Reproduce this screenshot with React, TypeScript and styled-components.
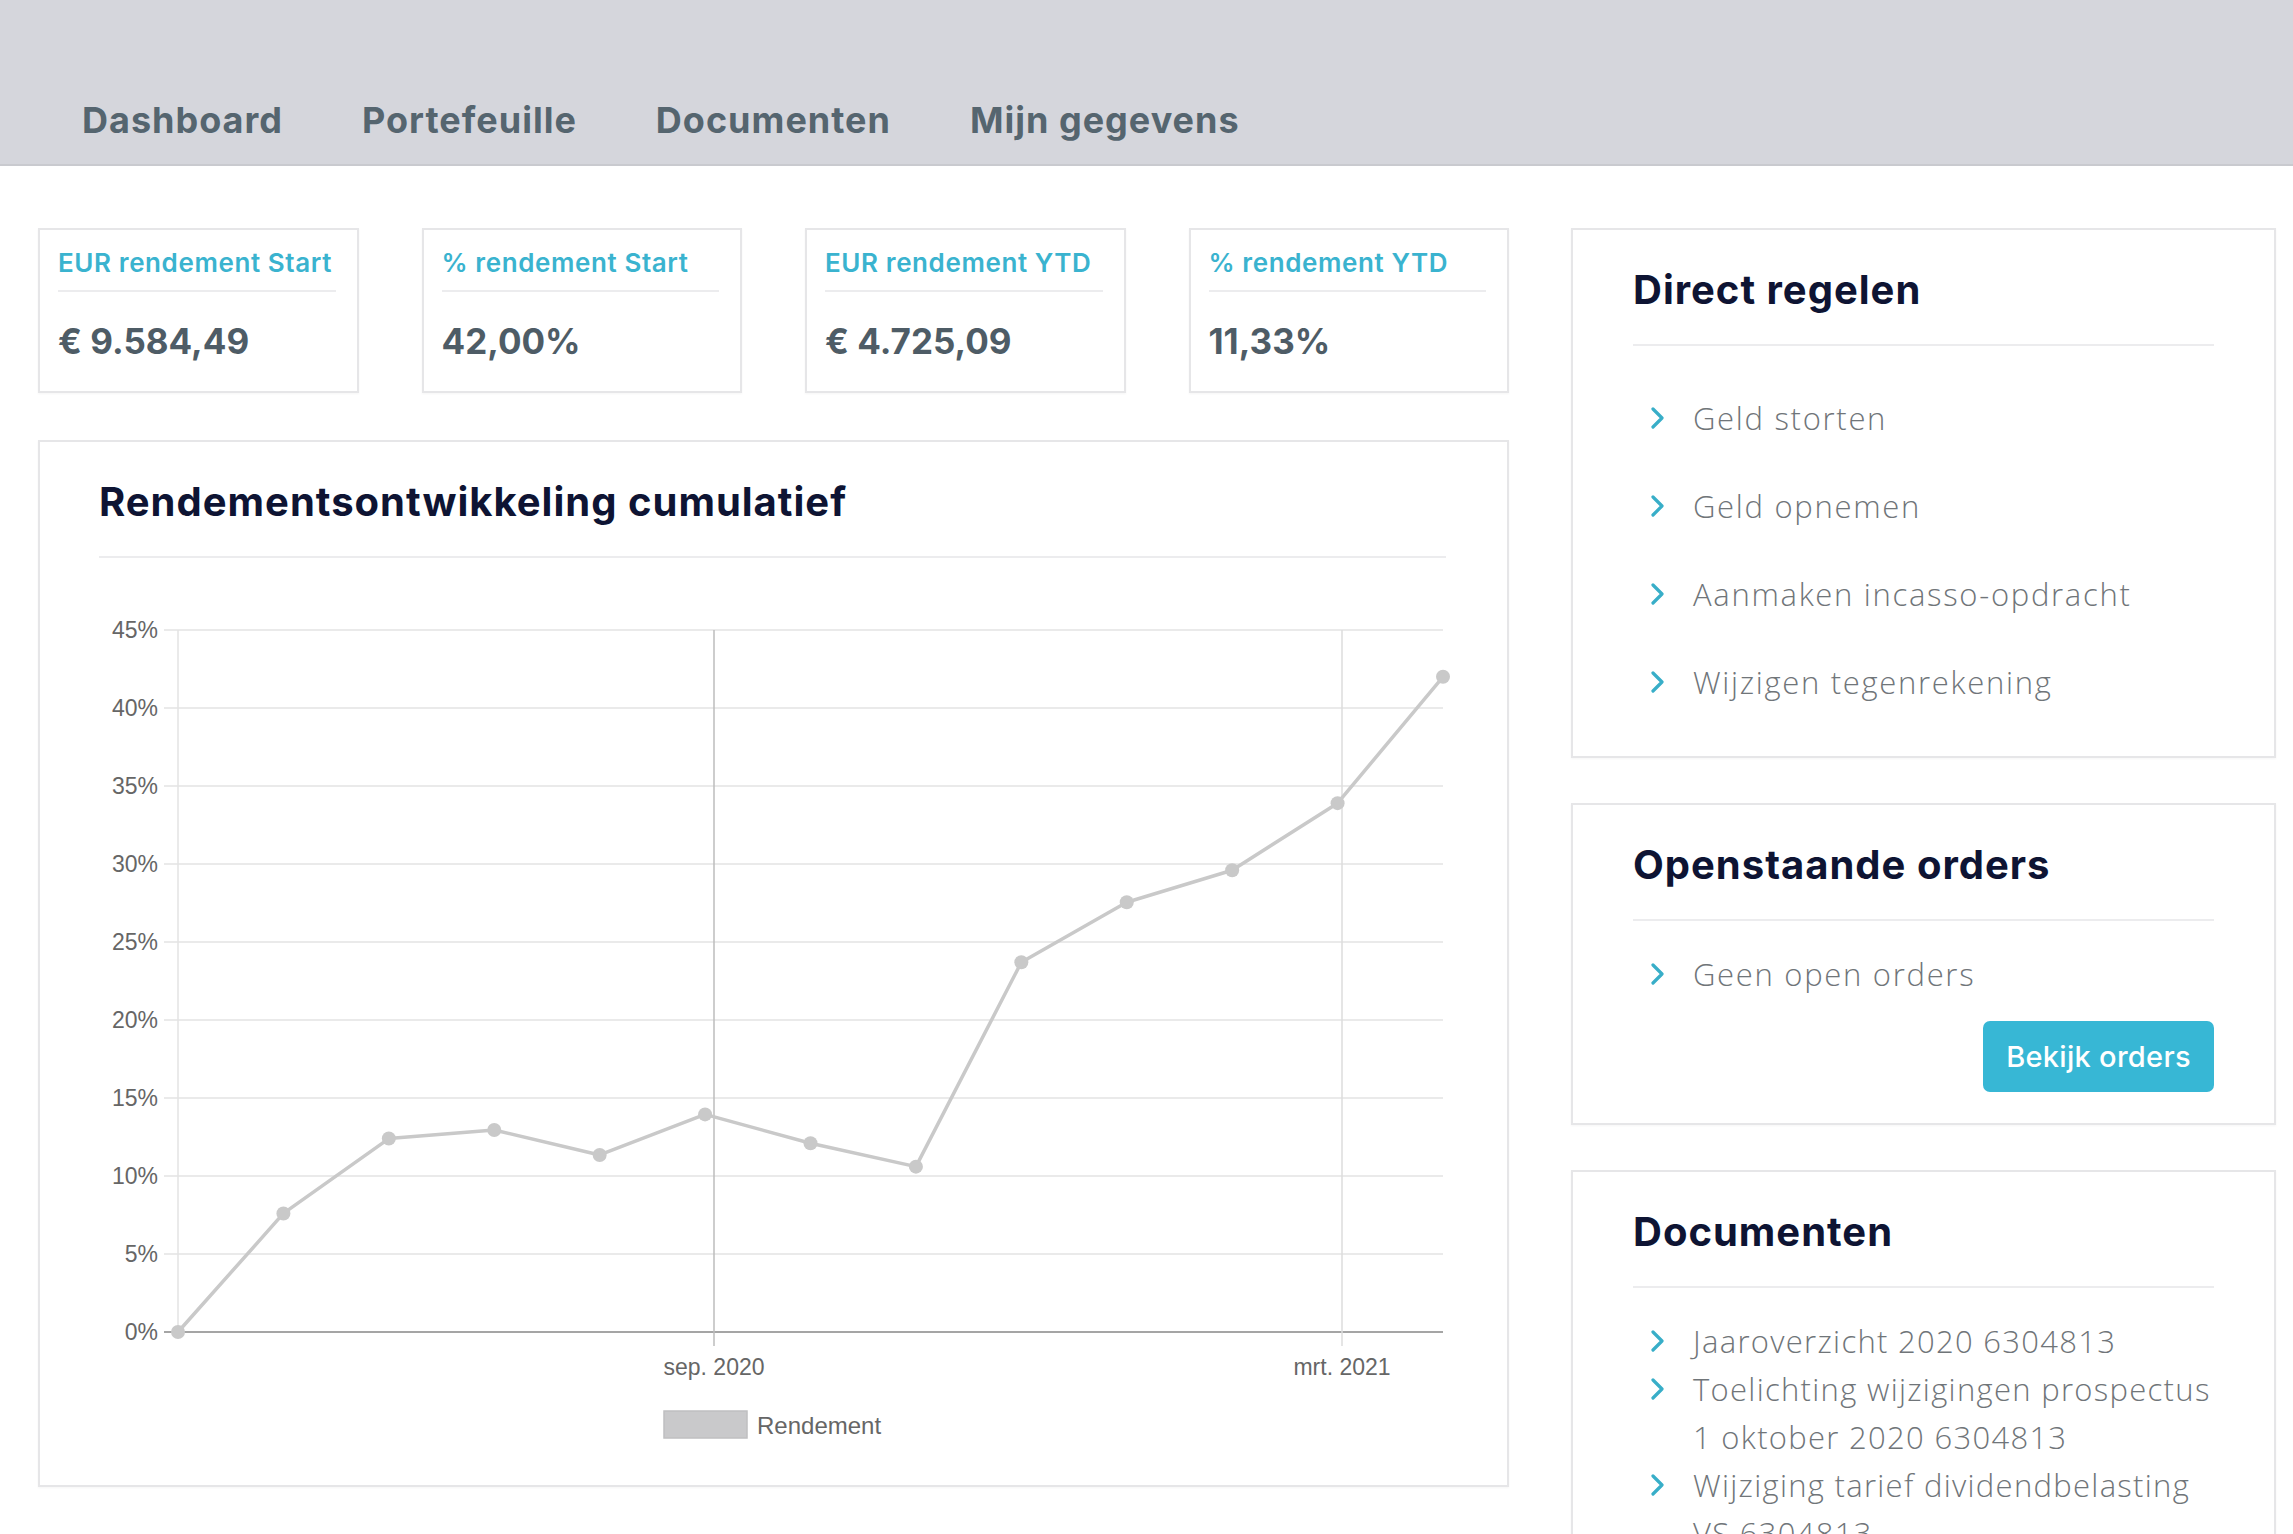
import styled, { createGlobalStyle } from "styled-components";

const GlobalStyle = createGlobalStyle`
  html, body {
    margin: 0;
    padding: 0;
    background: #ffffff;
    font-family: "Inter", "Noto Sans", sans-serif;
  }
  * {
    box-sizing: border-box;
  }
`;

const Header = styled.header`
  height: 166px;
  background: #d5d6dc;
  border-bottom: 2px solid #c9cacf;
  display: flex;
  align-items: flex-end;
  padding: 0 0 24px 82px;
`;

const Nav = styled.nav`
  display: flex;
  gap: 79px;
`;

const NavItem = styled.a`
  font-family: "Inter", sans-serif;
  font-weight: 700;
  font-size: 36px;
  line-height: 40px;
  letter-spacing: 1px;
  color: #55656f;
  text-decoration: none;
  cursor: pointer;
`;

const Main = styled.main`
  display: grid;
  grid-template-columns: 1471px 705px;
  gap: 62px;
  padding: 62px 17px 0 38px;
  align-items: start;
`;

const LeftColumn = styled.div`
  display: flex;
  flex-direction: column;
  gap: 47px;
`;

const RightColumn = styled.div`
  display: flex;
  flex-direction: column;
  gap: 45px;
`;

const StatRow = styled.div`
  display: grid;
  grid-template-columns: repeat(4, 1fr);
  gap: 63px;
`;

const Card = styled.section`
  background: #ffffff;
  border: 2px solid #e6e6e8;
  box-shadow: 0 1px 2px rgba(0, 0, 0, 0.04);
`;

const StatCard = styled(Card)`
  height: 165px;
  padding: 18px 21px 0 18px;
`;

const StatLabel = styled.div`
  font-family: "Inter", sans-serif;
  font-weight: 600;
  font-size: 26px;
  line-height: 30px;
  letter-spacing: 0.6px;
  color: #3ab3cf;
  padding-bottom: 12px;
  border-bottom: 2px solid #ececee;
  white-space: nowrap;
`;

const StatValue = styled.div`
  font-family: "Inter", sans-serif;
  font-weight: 700;
  font-size: 35px;
  line-height: 40px;
  color: #4e5c66;
  margin-top: 29px;
`;

const PanelCard = styled(Card)<{ $bottom?: number }>`
  padding: 37px 60px ${(p) => p.$bottom ?? 33}px 60px;
`;

const ChartCard = styled(Card)`
  padding: 37px 59px 35px 59px;
`;

const PanelTitle = styled.h2`
  margin: 0;
  font-family: "Inter", sans-serif;
  font-weight: 700;
  font-size: 40px;
  line-height: 46px;
  letter-spacing: 1px;
  color: #0e1433;
  padding-bottom: 31px;
  border-bottom: 2px solid #ececee;
`;

const ChartTitle = styled(PanelTitle)`
  margin-right: 2px;
`;

const ChartSvg = styled.svg`
  display: block;
  margin-top: 32px;
  overflow: visible;
  font-family: "Liberation Sans", Arial, sans-serif;
`;

const LinkList = styled.ul<{ $gap: number; $row: number }>`
  list-style: none;
  margin: ${(p) => p.$gap}px 0 0 0;
  padding: 0;

  li {
    min-height: ${(p) => p.$row}px;
  }
`;

const LinkItem = styled.li<{ $center?: boolean }>`
  display: flex;
  align-items: ${(p) => (p.$center ? "center" : "flex-start")};
  gap: 28px;
  padding-left: 17px;
  font-family: "Open Sans", sans-serif;
  font-weight: 300;
  font-size: 31px;
  line-height: 48px;
  letter-spacing: 1.7px;
  color: #707579;
  white-space: nowrap;
  cursor: pointer;
`;

const DocLines = styled.span`
  display: flex;
  flex-direction: column;
  letter-spacing: 1.3px;
`;

const ChevronBox = styled.span<{ $center?: boolean }>`
  flex: none;
  display: flex;
  align-items: center;
  height: ${(p) => (p.$center ? "auto" : "48px")};
`;

const ButtonRow = styled.div`
  display: flex;
  justify-content: flex-end;
  margin-top: 23px;
`;

const PrimaryButton = styled.button`
  width: 231px;
  height: 71px;
  border: none;
  border-radius: 7px;
  background: #37b7d5;
  color: #ffffff;
  font-family: "Inter", sans-serif;
  font-weight: 500;
  font-size: 29px;
  letter-spacing: 0.3px;
  cursor: pointer;
`;

const Chevron = ({ center }: { center?: boolean }) => (
  <ChevronBox $center={center}>
    <svg width="15" height="22" viewBox="0 0 15 22">
      <polyline
        points="3,2 12,11 3,20"
        fill="none"
        stroke="#38aec8"
        strokeWidth="3.2"
        strokeLinecap="round"
        strokeLinejoin="round"
      />
    </svg>
  </ChevronBox>
);

const stats = [
  { label: "EUR rendement Start", value: "€ 9.584,49" },
  { label: "% rendement Start", value: "42,00%" },
  { label: "EUR rendement YTD", value: "€ 4.725,09" },
  { label: "% rendement YTD", value: "11,33%" },
];

const values = [0, 7.6, 12.4, 12.95, 11.35, 13.95, 12.1, 10.6, 23.7, 27.55, 29.6, 33.9, 42.0];

const X0 = 178;
const X1 = 1443;
const Y0 = 1332;
const PER = 15.6;

const RendementChart = () => {
  const step = (X1 - X0) / (values.length - 1);
  const pts = values.map((v, i) => [X0 + i * step, Y0 - v * PER]);
  const ticks = [0, 5, 10, 15, 20, 25, 30, 35, 40, 45];
  return (
    <ChartSvg width="1349" height="860" viewBox="99 590 1349 860">
      {ticks.map((t) => {
        const y = Y0 - t * PER;
        return (
          <g key={t}>
            <line
              x1={164}
              x2={X1}
              y1={y}
              y2={y}
              stroke={t === 0 ? "#a5a5a5" : "#e3e3e3"}
              strokeWidth={t === 0 ? 2 : 1.5}
            />
            <text x={158} y={y} textAnchor="end" dominantBaseline="central" fontSize="23" fill="#666">
              {t}%
            </text>
          </g>
        );
      })}
      <line x1={X0} x2={X0} y1={630} y2={Y0} stroke="#e3e3e3" strokeWidth="1.5" />
      <line x1={714} x2={714} y1={630} y2={1346} stroke="#bdbdbd" strokeWidth="1.5" />
      <line x1={1342} x2={1342} y1={630} y2={1346} stroke="#dcdcdc" strokeWidth="1.5" />
      <text x={714} y={1367} textAnchor="middle" dominantBaseline="central" fontSize="23" fill="#666">
        sep. 2020
      </text>
      <text x={1342} y={1367} textAnchor="middle" dominantBaseline="central" fontSize="23" fill="#666">
        mrt. 2021
      </text>
      <polyline
        points={pts.map((p) => p.join(",")).join(" ")}
        fill="none"
        stroke="#c9c9c9"
        strokeWidth="3.5"
        strokeLinejoin="round"
      />
      {pts.map(([x, y], i) => (
        <circle key={i} cx={x} cy={y} r="7" fill="#c9c9c9" />
      ))}
      <rect x={664} y={1411} width={83} height={27} fill="#c9c9cb" stroke="#bfbfc1" strokeWidth="1.5" />
      <text x={757} y={1425} dominantBaseline="central" fontSize="24" fill="#666">
        Rendement
      </text>
    </ChartSvg>
  );
};

const directLinks = ["Geld storten", "Geld opnemen", "Aanmaken incasso-opdracht", "Wijzigen tegenrekening"];

const documents = [
  ["Jaaroverzicht 2020 6304813"],
  ["Toelichting wijzigingen prospectus", "1 oktober 2020 6304813"],
  ["Wijziging tarief dividendbelasting", "VS 6304813"],
];

const App = () => {
  return (
    <>
      <GlobalStyle />
      <Header>
        <Nav>
          <NavItem>Dashboard</NavItem>
          <NavItem>Portefeuille</NavItem>
          <NavItem>Documenten</NavItem>
          <NavItem>Mijn gegevens</NavItem>
        </Nav>
      </Header>
      <Main>
        <LeftColumn>
          <StatRow>
            {stats.map((s) => (
              <StatCard key={s.label}>
                <StatLabel>{s.label}</StatLabel>
                <StatValue>{s.value}</StatValue>
              </StatCard>
            ))}
          </StatRow>
          <ChartCard>
            <ChartTitle>Rendementsontwikkeling cumulatief</ChartTitle>
            <RendementChart />
          </ChartCard>
        </LeftColumn>

        <RightColumn>
          <PanelCard $bottom={30}>
            <PanelTitle>Direct regelen</PanelTitle>
            <LinkList $gap={28} $row={88}>
              {directLinks.map((l) => (
                <LinkItem key={l} $center>
                  <Chevron center />
                  <span>{l}</span>
                </LinkItem>
              ))}
            </LinkList>
          </PanelCard>

          <PanelCard $bottom={31}>
            <PanelTitle>Openstaande orders</PanelTitle>
            <LinkList $gap={29} $row={48}>
              <LinkItem>
                <Chevron />
                <span>Geen open orders</span>
              </LinkItem>
            </LinkList>
            <ButtonRow>
              <PrimaryButton>Bekijk orders</PrimaryButton>
            </ButtonRow>
          </PanelCard>

          <PanelCard $bottom={40}>
            <PanelTitle>Documenten</PanelTitle>
            <LinkList $gap={29} $row={48}>
              {documents.map((d) => (
                <LinkItem key={d[0]}>
                  <Chevron />
                  <DocLines>
                    {d.map((line) => (
                      <span key={line}>{line}</span>
                    ))}
                  </DocLines>
                </LinkItem>
              ))}
            </LinkList>
          </PanelCard>
        </RightColumn>
      </Main>
    </>
  );
};

export default App;
